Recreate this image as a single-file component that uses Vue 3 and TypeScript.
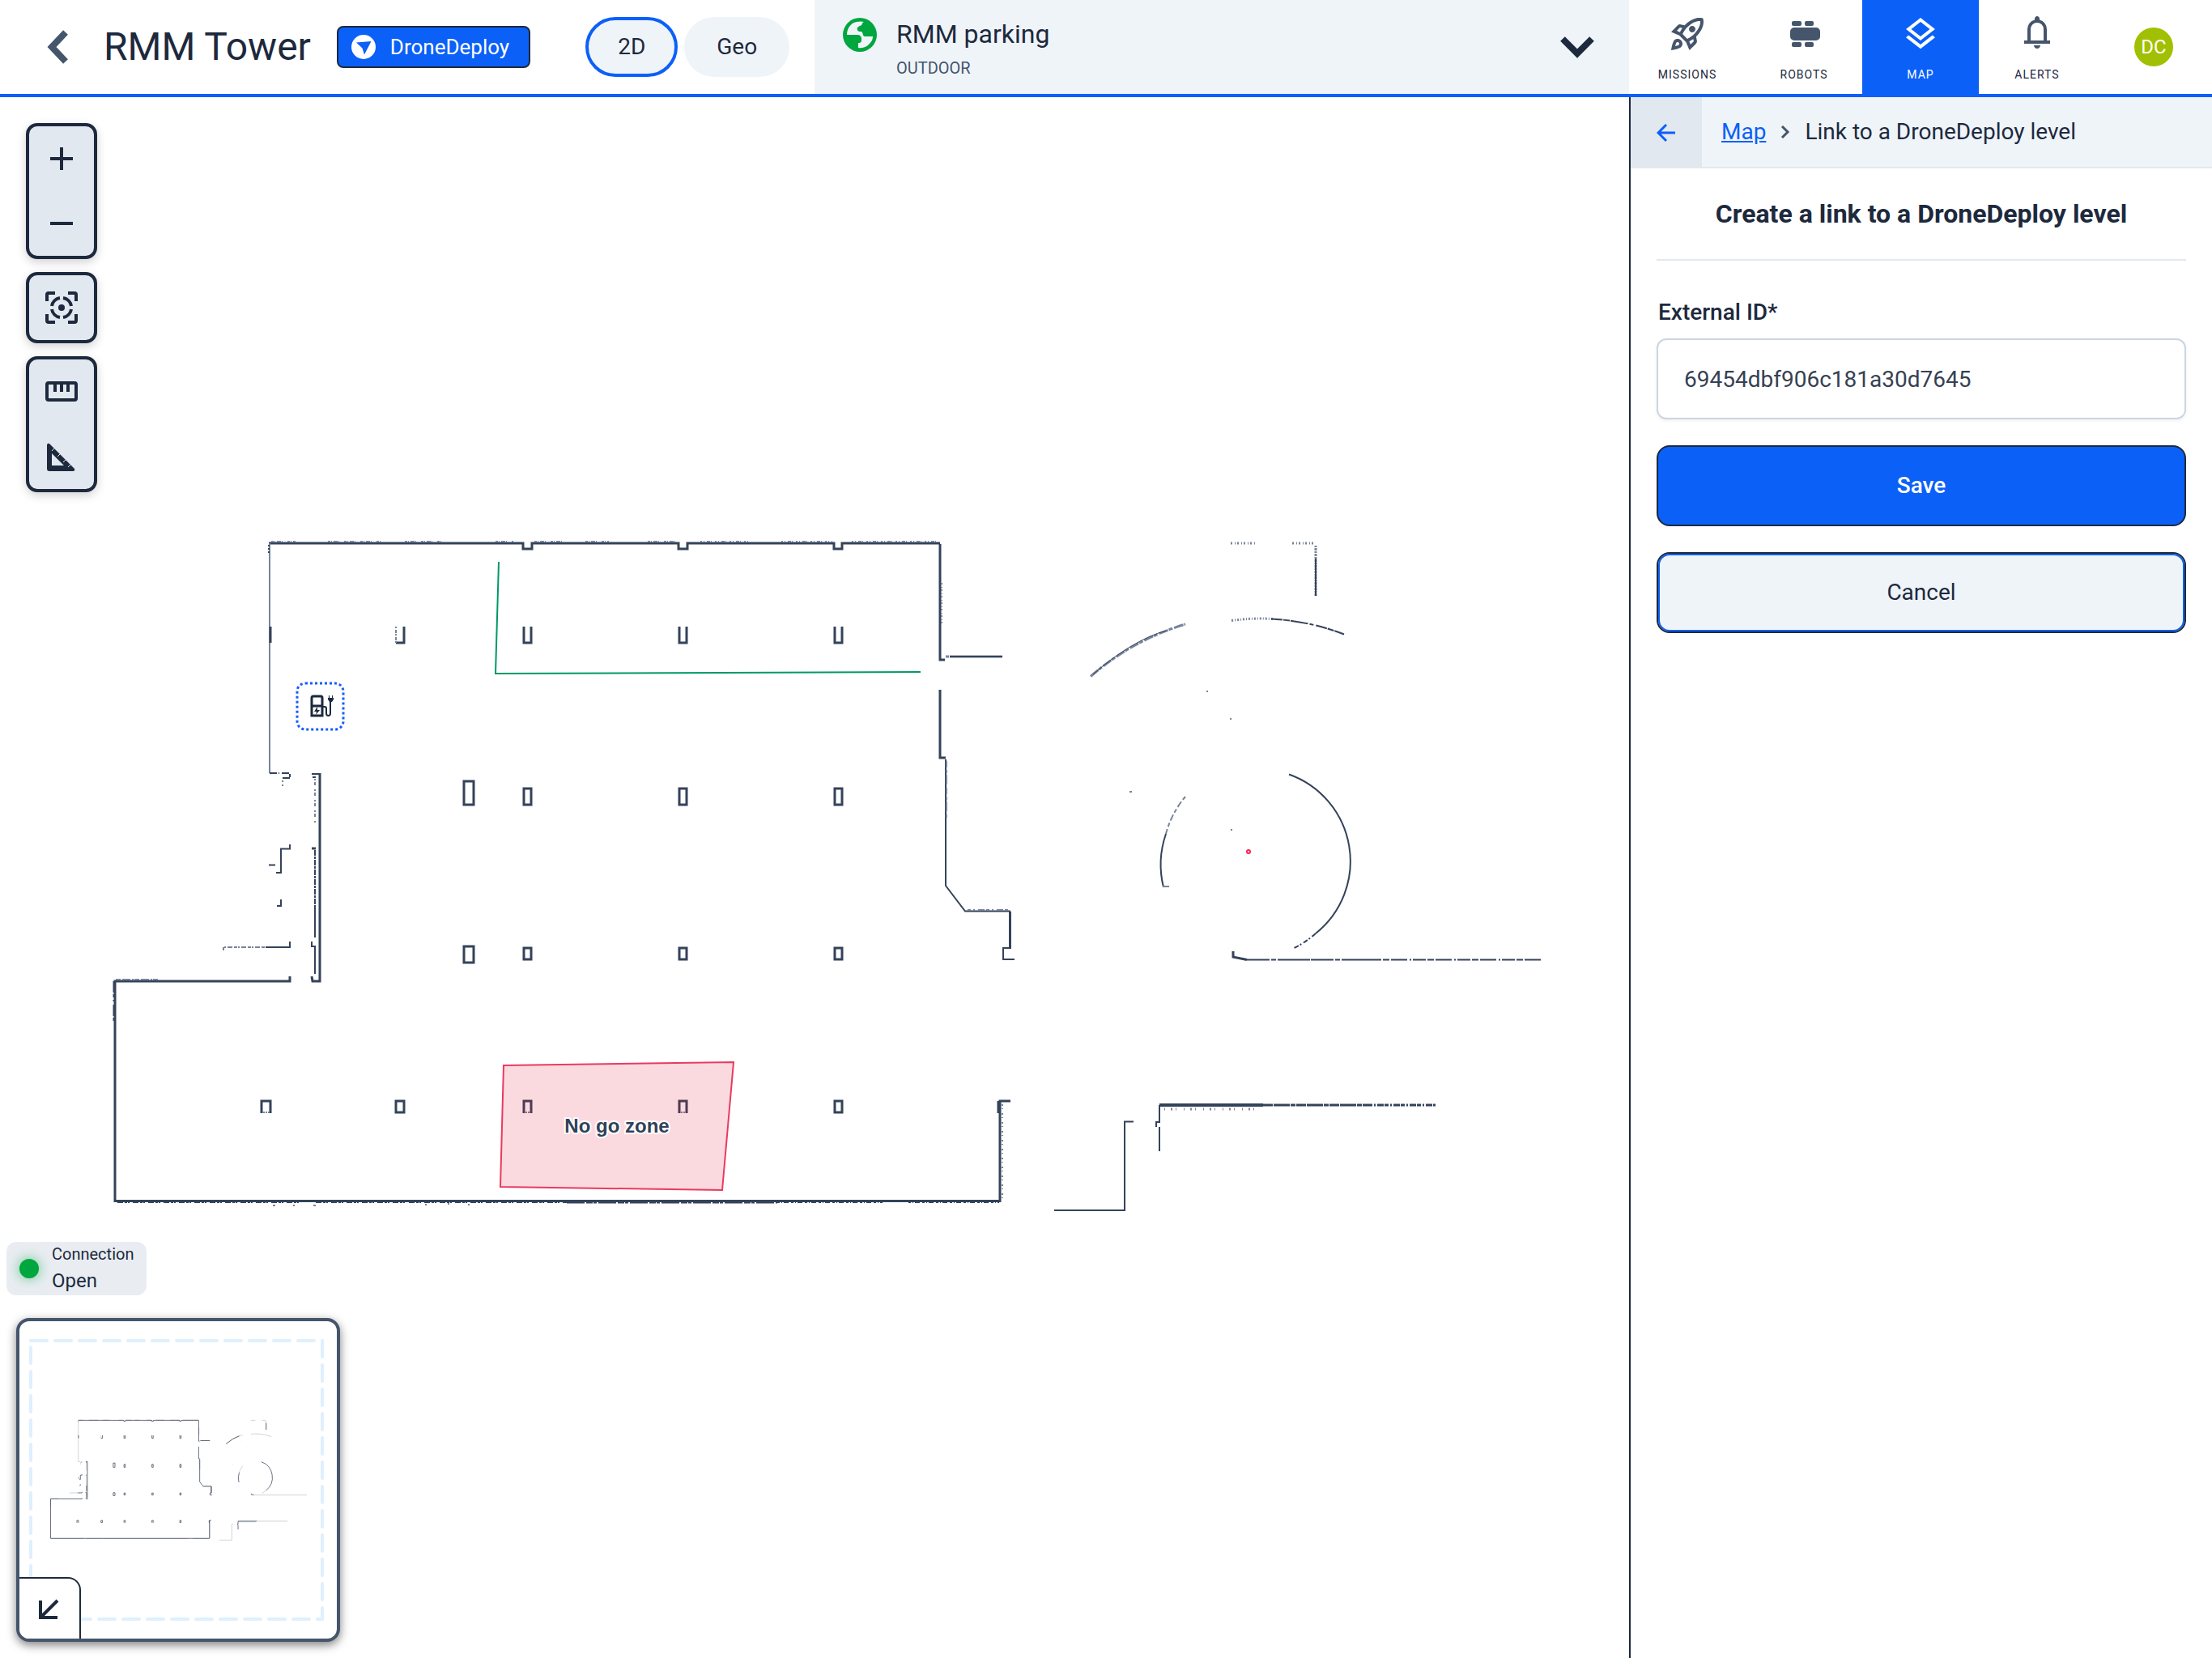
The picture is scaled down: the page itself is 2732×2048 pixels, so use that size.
<script setup lang="ts">
import { ref } from 'vue'

interface Stroke {
  d: string
  w: number
  dash?: string
  soft?: boolean
}

interface NavItem {
  id: string
  label: string
  viewBox: string
  path: string
}

const viewMode = ref<'2d' | 'geo'>('2d')
const externalId = ref('69454dbf906c181a30d7645')
const activeNav = 'map'

const navItems: NavItem[] = [
  {
    id: 'missions',
    label: 'MISSIONS',
    viewBox: '0 0 24 24',
    path: 'M6 15c-.83 0-1.58.34-2.12.88C2.7 17.06 2 22 2 22s4.94-.7 6.12-1.88c.54-.54.88-1.29.88-2.12 0-1.66-1.34-3-3-3zm.71 3.71c-.28.28-2.17.76-2.17.76s.47-1.88.76-2.17c.17-.19.42-.3.7-.3.55 0 1 .45 1 1 0 .28-.11.53-.29.71zm10.71-5.06c6.36-6.36 4.24-11.31 4.24-11.31S16.71.22 10.35 6.58l-2.49-.5c-.65-.13-1.33.08-1.81.55L2 10.69l5 2.14L11.17 17l2.14 5 4.05-4.05c.47-.47.68-1.15.55-1.81l-.49-2.49zM7.41 10.83l-1.91-.82 1.97-1.97 1.44.29c-.57.83-1.08 1.7-1.5 2.5zm6.58 7.67l-.82-1.91c.8-.42 1.67-.93 2.49-1.5l.29 1.44-1.96 1.97zM16 12.24c-1.32 1.32-3.38 2.4-4.04 2.73l-2.93-2.93c.32-.65 1.4-2.71 2.73-4.04 4.68-4.68 8.23-3.99 8.23-3.99s.69 3.55-3.99 8.23zM15 11c1.1 0 2-.9 2-2s-.9-2-2-2-2 .9-2 2 .9 2 2 2z',
  },
  {
    id: 'robots',
    label: 'ROBOTS',
    viewBox: '0 0 48 48',
    path: 'M12 16h27a5 5 0 0 1 5 5v6a5 5 0 0 1-5 5H12a5 5 0 0 1-5-5v-6a5 5 0 0 1 5-5zM11 8h8a2 2 0 0 1 2 2v2a2 2 0 0 1-2 2h-8a2 2 0 0 1-2-2v-2a2 2 0 0 1 2-2zM27 8h7a2 2 0 0 1 2 2v2a2 2 0 0 1-2 2h-7a2 2 0 0 1-2-2v-2a2 2 0 0 1 2-2zM11 34h8a2 2 0 0 1 2 2v2a2 2 0 0 1-2 2h-8a2 2 0 0 1-2-2v-2a2 2 0 0 1 2-2zM27 34h7a2 2 0 0 1 2 2v2a2 2 0 0 1-2 2h-7a2 2 0 0 1-2-2v-2a2 2 0 0 1 2-2z',
  },
  {
    id: 'map',
    label: 'MAP',
    viewBox: '0 0 24 24',
    path: 'M11.99 18.54l-7.37-5.73L3 14.07l9 7 9-7-1.63-1.27zM12 16l7.36-5.73L21 9l-9-7-9 7 1.63 1.27L12 16zm0-11.47L17.74 9 12 13.47 6.26 9 12 4.53z',
  },
  {
    id: 'alerts',
    label: 'ALERTS',
    viewBox: '0 -920 960 960',
    path: 'M160-200v-80h80v-280q0-83 50-147.500T420-792v-28q0-25 17.500-42.500T480-880q25 0 42.500 17.500T540-820v28q80 20 130 84.500T720-560v280h80v80H160Zm320 120q-33 0-56.500-23.500T400-160h160q0 33-23.500 56.500T480-80ZM320-280h320v-280q0-66-47-113t-113-47q-66 0-113 47t-47 113v280Z',
  },
]

// Solid and scanned wall segments, in floor-plan coordinates.
const walls: Stroke[] = [
  // upper hall
  { d: 'M332 551H646V558H657V551H838V558H849V551H1030V558H1040V551H1161', w: 3 },
  { d: 'M335 549H365M405 549H470M500 549H545M612 549H634M660 549H700M723 549H752M800 549H834', w: 2, dash: '3 1 1 2 5 1 1 6', soft: true },
  { d: 'M865 549H925M965 549H1028M1052 549H1160', w: 2, dash: '2 2 1 3 4 1 1 4', soft: true },
  { d: 'M333 551V835', w: 2, soft: true },
  { d: 'M332 553V565', w: 2, dash: '2 2' },
  { d: 'M334 654V674', w: 3 },
  { d: 'M1161 552V695H1167', w: 3 },
  { d: 'M1163 600V650', w: 2, dash: '2 3 1 2', soft: true },
  { d: 'M1168 691H1172M1173 691H1238', w: 3, soft: true },
  { d: 'M1173 691H1238', w: 2 },
  { d: 'M1161 732V816H1168', w: 3 },
  { d: 'M1168 818V974L1192 1005.500H1247V1051', w: 2 },
  { d: 'M1169 820V890', w: 2, dash: '8 3 4 2 12 4', soft: true },
  { d: 'M1195 1004H1245', w: 2, dash: '4 3 2 4 8 2', soft: true },
  { d: 'M1248 1006V1051H1239V1065H1253', w: 2 },
  // stair core on the left
  { d: 'M333 835H345M348 835H358V841H347', w: 2, dash: '9 2 4 1' },
  { d: 'M349 844V854', w: 2, dash: '2 3', soft: true },
  { d: 'M385 836H395M386 840H390', w: 2 },
  { d: 'M395 835V1092H386L385 1086', w: 3 },
  { d: 'M389 842V896', w: 2, dash: '2 2 4 5', soft: true },
  { d: 'M385 928H390', w: 3 },
  { d: 'M389 930V1000', w: 2, dash: '7 1 3 1' },
  { d: 'M389 1000V1038M385 1043V1049H389V1083', w: 2 },
  { d: 'M358 923V928.500H347V958H341M332 948.500H340M347 991V999H342', w: 2 },
  { d: 'M276 1054V1050H328', w: 2, dash: '4 1 2 2 6 2', soft: true },
  { d: 'M328 1050H358V1043', w: 2 },
  // lower hall
  { d: 'M358 1086V1092H142V1363.500H1235V1240H1248', w: 3 },
  { d: 'M141 1092V1142', w: 3, dash: '14 2 4 3 2 4' },
  { d: 'M143 1090H195', w: 2, dash: '6 2 10 2 2 1', soft: true },
  { d: 'M145 1365H370M390 1365H500M505 1365H700', w: 2, dash: '7 2 3 1 2 4' },
  { d: 'M700 1365H960', w: 3, dash: '22 2 8 1 4 2' },
  { d: 'M960 1365H1090M1122 1365H1234', w: 2, dash: '3 2 1 2 6 3' },
  { d: 'M337 1369H340M362 1369H364M387 1369H390M525 1368H527M553 1367H555M578 1368H580', w: 2, soft: true },
  { d: 'M1233 1240V1255', w: 3 },
  { d: 'M1238 1244V1360', w: 2, dash: '2 3 1 5', soft: true },
  // ramp
  { d: 'M1520 551H1551M1596 551H1622', w: 3, dash: '2 3 1 2', soft: true },
  { d: 'M1625 554V616', w: 3, dash: '2 1 3 1', soft: true },
  { d: 'M1625 570V616', w: 2 },
  { d: 'M1347 715.500Q1398 671 1464 651', w: 3, dash: '12 1 5 2', soft: true },
  { d: 'M1350 713Q1398 671 1440 659', w: 1 },
  { d: 'M1521 646.500C1540 644 1555 643.500 1572 644.500', w: 3, dash: '2 2 1 2', soft: true },
  { d: 'M1570 644.500C1600 646 1630 652 1660 663.500', w: 2, dash: '14 1 8 1 22 2 5 3' },
  { d: 'M1592 836.500A114 114 0 0 1 1625 1033', w: 2 },
  { d: 'M1625 1033A114 114 0 0 1 1596 1052', w: 2, dash: '6 3 2 2' },
  { d: 'M1464 864A117 117 0 0 0 1440 910', w: 2, dash: '5 3 8 3', soft: true },
  { d: 'M1440 910A117 117 0 0 0 1437 976', w: 2 },
  { d: 'M1436 975H1444M1490 734H1492M1519 768H1521M1395 858H1398M1520 905H1522', w: 2, soft: true },
  { d: 'M1523 1055V1062L1540 1065.500', w: 3 },
  { d: 'M1540 1065.500H1690', w: 2, dash: '28 2 6 2 40 1' },
  { d: 'M1690 1065.500H1906', w: 2, dash: '16 2 8 2 20 3 2 2' },
  { d: 'M1432 1245H1560', w: 4 },
  { d: 'M1560 1245H1690', w: 3, dash: '12 1 20 1 6 1' },
  { d: 'M1690 1245H1773', w: 3, dash: '5 2 2 2 8 1' },
  { d: 'M1438 1250H1552', w: 3, dash: '1 7 2 4 1 9', soft: true },
  { d: 'M1432 1245V1266H1428V1272M1432 1272V1302', w: 2 },
  { d: 'M1400 1265.500H1389V1375H1302', w: 2, dash: '400 0' },
]

const pillarColumns = [646, 838, 1030]
const pillars: Stroke[] = [
  { d: 'M499 654V674H489', w: 3 },
  { d: 'M489 654V674', w: 2, dash: '2 2 4 1', soft: true },
  ...pillarColumns.map((x) => ({ d: `M${x + 1} 654V674H${x + 10}V654`, w: 3 })),
  { d: 'M573 845H585V874H573Z', w: 3 },
  ...pillarColumns.map((x) => ({ d: `M${x + 1} 854H${x + 10}V874H${x + 1}Z`, w: 3 })),
  { d: 'M573 1049H585V1069H573Z', w: 3 },
  ...pillarColumns.map((x) => ({ d: `M${x + 1} 1051H${x + 10}V1065H${x + 1}Z`, w: 3 })),
  { d: 'M323 1255V1240H334V1255', w: 3 },
  { d: 'M489 1240H499V1254H489Z', w: 3 },
  { d: 'M647 1255V1240H656V1255', w: 3 },
  { d: 'M839 1255V1240H848V1255', w: 3 },
  { d: 'M1031 1240H1040V1254H1031Z', w: 3 },
  { d: 'M325 1254H333M649 1254H655M841 1254H847', w: 2, dash: '2 1', soft: true },
]

const floorPlan: Stroke[] = [...walls, ...pillars]
</script>

<template>
  <div class="app">
    <header class="topbar">
      <div class="site">
        <button class="back" type="button" aria-label="Back">
          <svg width="28" height="44" viewBox="0 0 28 44" fill="none" stroke="currentColor" stroke-width="8">
            <path d="M25 4L8 22l17 18" />
          </svg>
        </button>
        <h1>RMM Tower</h1>
        <a class="badge" href="#dronedeploy">
          <svg width="30" height="30" viewBox="0 0 30 30">
            <circle cx="15" cy="15" r="15" fill="#fff" />
            <path d="M6 9.500L24.500 8 16 24.500l-2.500-8z" fill="#0b60f8" />
          </svg>
          DroneDeploy
        </a>
        <div class="modes">
          <button type="button" :class="['mode', { on: viewMode === '2d' }]" @click="viewMode = '2d'">2D</button>
          <button type="button" :class="['mode', { on: viewMode === 'geo' }]" @click="viewMode = 'geo'">Geo</button>
        </div>
      </div>

      <button class="level" type="button">
        <svg class="globe" width="42" height="42" viewBox="0 0 42 42">
          <circle cx="21" cy="21" r="21" fill="#00a63e" />
          <path
            d="M26 5c-3 1-1 4-5 5-3 1-4 3-3 5 1 3 5 1 6 3 1 3 1 5 4 5h9c0 5-3 8-6 11-3 2-7 4-12 3v-6c4 0 4-2 4-4 0-5-2-6-6-6H5C5 13 10 6 17 5q5-1 9 0z"
            fill="#eff4f9"
          />
        </svg>
        <span class="level-text">
          <span class="level-name">RMM parking</span>
          <span class="level-kind">OUTDOOR</span>
        </span>
        <svg width="42" height="28" viewBox="0 0 42 28" fill="none" stroke="#1d293d" stroke-width="8">
          <path d="M3 4l18 18L39 4" />
        </svg>
      </button>

      <nav class="nav">
        <a
          v-for="item in navItems"
          :key="item.id"
          :href="'#' + item.id"
          :class="['nav-item', { active: item.id === activeNav }]"
        >
          <svg width="48" height="48" :viewBox="item.viewBox" fill="currentColor"><path :d="item.path" /></svg>
          <span>{{ item.label }}</span>
        </a>
        <div class="account"><button class="avatar" type="button">DC</button></div>
      </nav>
    </header>

    <main class="content">
      <section class="map" aria-label="Map">
        <svg class="canvas" viewBox="0 0 2012 1928">
          <g fill="none">
            <path
              v-for="(s, i) in floorPlan"
              :key="i"
              :d="s.d"
              :stroke="s.soft ? '#78849a' : '#34435a'"
              :stroke-width="s.w"
              :stroke-dasharray="s.dash"
            />
          </g>
          <path d="M616 574L612 712L1137 710" fill="none" stroke="#009966" stroke-width="2" />
          <path d="M622 1196L906 1192L892 1350L618 1346Z" fill="#e4062a" fill-opacity="0.15" stroke="#e93a60" stroke-width="2" />
          <circle cx="1542" cy="932" r="2" fill="#fff" stroke="#ff2056" stroke-width="2" />
          <text class="zone-name" x="762" y="1279" text-anchor="middle">No go zone</text>
          <g>
            <rect x="367" y="724" width="57" height="57" rx="10" fill="#fff" stroke="#155dfc" stroke-width="3" stroke-dasharray="3 3" />
            <g fill="none" stroke="#1d293d">
              <path d="M385 764v-22q0-2 2-2h9q2 0 2 2v22z" stroke-width="3" />
              <path d="M385 752h13" stroke-width="3" />
              <path d="M399 753h2q2 0 2 2v6q0 3 2.500 3t2.500-3v-14" stroke-width="2" />
            </g>
            <path d="M405 742h1v-3h1v3h3v-3h1v3h1v2l-2 3h-3l-2-3zM392 753l-4 6h3l-1 4 5-6h-3z" fill="#1d293d" />
          </g>
        </svg>

        <div class="tools">
          <div class="tool-group">
            <button type="button" aria-label="Zoom in">
              <svg width="48" height="48" viewBox="0 0 48 48" fill="none" stroke="currentColor" stroke-width="4"><path d="M10 24h28M24 10v28" /></svg>
            </button>
            <button type="button" aria-label="Zoom out">
              <svg width="48" height="48" viewBox="0 0 48 48" fill="none" stroke="currentColor" stroke-width="4"><path d="M10 24h28" /></svg>
            </button>
          </div>
          <div class="tool-group">
            <button type="button" aria-label="Center map">
              <svg width="48" height="48" viewBox="0 0 48 48" fill="none" stroke="currentColor" stroke-width="4">
                <path d="M6 16V8q0-2 2-2h8M32 6h8q2 0 2 2v8M42 32v8q0 2-2 2h-8M16 42H8q-2 0-2-2v-8" />
                <path d="M12 22a12 12 0 0 1 10-10M26 12a12 12 0 0 1 10 10M36 26a12 12 0 0 1-10 10M22 36a12 12 0 0 1-10-10" />
                <circle cx="24" cy="24" r="4" fill="currentColor" stroke="none" />
              </svg>
            </button>
          </div>
          <div class="tool-group">
            <button type="button" aria-label="Measure distance">
              <svg width="48" height="48" viewBox="0 0 48 48" fill="none" stroke="currentColor" stroke-width="4">
                <rect x="6" y="13" width="36" height="21" rx="2" />
                <path d="M16 14v10M24 14v10M32 14v10" />
              </svg>
            </button>
            <button type="button" aria-label="Measure area">
              <svg width="48" height="48" viewBox="0 0 48 48">
                <path d="M6 10q0-3 3-2l31 31q1 3-2 3H9q-3 0-3-3zM12 20v15h15z" fill="currentColor" fill-rule="evenodd" />
                <path d="M12 17l3-3M19 24l3-3M26 31l3-3M32 37l3-3" stroke="#e2e8f0" stroke-width="1" />
              </svg>
            </button>
          </div>
        </div>

        <div class="connection">
          <span class="dot"></span>
          <div>
            <div class="connection-label">Connection</div>
            <div class="connection-state">Open</div>
          </div>
        </div>

        <div class="minimap">
          <svg width="392" height="392" viewBox="0 0 392 392" fill="none">
            <g transform="translate(13 23.500) scale(0.1795)">
              <path
                v-for="(s, i) in floorPlan"
                :key="i"
                :d="s.d"
                stroke="#1d293d"
                :stroke-opacity="s.dash || s.soft ? 0.2 : 0.65"
                :stroke-width="1"
                vector-effect="non-scaling-stroke"
              />
            </g>
            <path d="M14 24H374V368H14Z" stroke="#dff0fe" stroke-width="4" stroke-linecap="round" stroke-dasharray="20 10" />
          </svg>
          <button class="collapse" type="button" aria-label="Collapse minimap">
            <svg width="32" height="32" viewBox="0 0 32 32" fill="none" stroke="currentColor" stroke-width="4">
              <path d="M26 6L6 26M5 6v21h21" />
            </svg>
          </button>
        </div>
      </section>

      <aside class="panel">
        <div class="crumbs">
          <button class="crumb-back" type="button" aria-label="Back to map">
            <svg width="24" height="24" viewBox="0 0 24 24" fill="none" stroke="currentColor" stroke-width="3">
              <path d="M23 12H3M12 2L2 12l10 10" />
            </svg>
          </button>
          <div class="trail">
            <a href="#map">Map</a>
            <svg width="12" height="18" viewBox="0 0 12 18" fill="none" stroke="#45556c" stroke-width="3"><path d="M2 2l7 7-7 7" /></svg>
            <span>Link to a DroneDeploy level</span>
          </div>
        </div>
        <form class="form" @submit.prevent>
          <h2>Create a link to a DroneDeploy level</h2>
          <label for="external-id">External ID*</label>
          <input id="external-id" v-model="externalId" type="text" />
          <button class="save" type="submit">Save</button>
          <button class="cancel" type="button">Cancel</button>
        </form>
      </aside>
    </main>
  </div>
</template>

<style>
body {
  margin: 0;
  background: #fff;
}
</style>

<style scoped>
.app {
  display: flex;
  flex-direction: column;
  min-height: 100vh;
  font-family: Roboto, sans-serif;
  font-size: 28px;
  line-height: 40px;
  color: #1d293d;
}

.app *,
.app {
  box-sizing: border-box;
}

button,
input {
  font: inherit;
  color: inherit;
  margin: 0;
  padding: 0;
  border: 0;
  background: none;
}

button {
  cursor: pointer;
}

a {
  color: inherit;
  text-decoration: none;
}

svg {
  display: block;
  flex: none;
}

.topbar {
  display: grid;
  grid-template-columns: 1fr 1fr 720px;
  height: 120px;
  border-bottom: 4px solid #0b60f8;
}

.site {
  display: flex;
  align-items: center;
  padding-left: 56px;
}

.back {
  color: #45556c;
}

h1 {
  margin: 0 32px 0 44px;
  font-size: 48px;
  line-height: 56px;
  font-weight: 400;
  white-space: nowrap;
}

.badge {
  display: flex;
  align-items: center;
  gap: 18px;
  height: 52px;
  padding: 0 24px 0 16px;
  border: 2px solid #1d293d;
  border-radius: 8px;
  background: #0b60f8;
  color: #fff;
  font-size: 26px;
  white-space: nowrap;
}

.modes {
  display: flex;
  gap: 8px;
  margin-left: 68px;
}

.mode {
  height: 74px;
  padding: 0 40px;
  border-radius: 37px;
  background: #eff4f9;
}

.mode.on {
  padding: 0 36px;
  border: 4px solid #0b60f8;
}

.level {
  display: flex;
  align-items: center;
  gap: 24px;
  padding: 0 43px 0 35px;
  background: #eff4f9;
  text-align: left;
}

.globe {
  align-self: flex-start;
  margin-top: 22px;
}

.level-text {
  display: flex;
  flex: 1;
  flex-direction: column;
  gap: 6px;
  padding-top: 2px;
}

.level-name {
  font-size: 32px;
  line-height: 44px;
}

.level-kind {
  font-size: 20px;
  line-height: 28px;
  color: #45556c;
}

.nav {
  display: grid;
  grid-template-columns: repeat(5, 1fr);
}

.nav-item {
  display: flex;
  flex-direction: column;
  align-items: center;
  gap: 16px;
  padding-top: 18px;
  font-size: 14px;
  line-height: 20px;
  letter-spacing: 1px;
}

.nav-item svg {
  color: #45556c;
}

.nav-item.active,
.nav-item.active svg {
  background: #0b60f8;
  color: #fff;
}

.account {
  display: flex;
  align-items: center;
  justify-content: center;
}

.avatar {
  width: 48px;
  height: 48px;
  border-radius: 50%;
  background: #a2c003;
  color: #fff;
  font-size: 24px;
  line-height: 48px;
}

.content {
  display: grid;
  flex: 1;
  grid-template-columns: 1fr 720px;
}

.map {
  position: relative;
  overflow: hidden;
}

.canvas {
  width: 100%;
}

.zone-name {
  font: bold 24px 'Liberation Sans', sans-serif;
  fill: #314158;
  stroke: #fff;
  stroke-width: 4px;
  stroke-linejoin: round;
  paint-order: stroke;
}

.tools {
  position: absolute;
  top: 32px;
  left: 32px;
  display: flex;
  flex-direction: column;
  gap: 16px;
}

.tool-group {
  display: flex;
  flex-direction: column;
  border: 4px solid #1d293d;
  border-radius: 14px;
  background: #e2e8f0;
  box-shadow: 0 4px 12px rgb(0 0 0 / 18%);
}

.tool-group button {
  display: flex;
  align-items: center;
  justify-content: center;
  width: 80px;
  height: 80px;
}

.connection {
  position: absolute;
  bottom: 448px;
  left: 8px;
  display: flex;
  align-items: center;
  gap: 16px;
  height: 66px;
  padding: 0 16px;
  border-radius: 12px;
  background: #e9edf2;
}

.dot {
  width: 24px;
  height: 24px;
  border-radius: 50%;
  background: #00a63e;
  box-shadow: 0 0 16px rgb(0 166 62 / 60%);
}

.connection-label {
  margin-bottom: 2px;
  font-size: 20px;
  line-height: 28px;
}

.connection-state {
  font-size: 24px;
  line-height: 34px;
}

.minimap {
  position: absolute;
  bottom: 20px;
  left: 20px;
  overflow: hidden;
  border: 4px solid #45556c;
  border-radius: 16px;
  background: #fff;
  box-shadow: 0 4px 12px rgb(0 0 0 / 50%);
}

.collapse {
  position: absolute;
  bottom: 0;
  left: 0;
  display: flex;
  align-items: center;
  justify-content: center;
  width: 76px;
  height: 76px;
  border: solid #1d293d;
  border-width: 2px 2px 0 0;
  border-top-right-radius: 16px;
  background: #fff;
}

.panel {
  border-left: 2px solid #1d293d;
}

.crumbs {
  display: flex;
  height: 88px;
  background: #eff4f9;
}

.crumb-back {
  display: flex;
  align-items: center;
  justify-content: center;
  width: 88px;
  background: #e2e8f0;
  color: #0b60f8;
}

.trail {
  display: flex;
  flex: 1;
  align-items: center;
  gap: 18px;
  padding-left: 24px;
  border-bottom: 2px solid #e2e8f0;
  white-space: nowrap;
}

.trail a {
  color: #0b60f8;
  text-decoration: underline;
}

.form {
  display: flex;
  flex-direction: column;
  padding: 32px;
}

h2 {
  margin: 0 0 44px;
  padding-bottom: 32px;
  border-bottom: 2px solid #e2e8f0;
  font-size: 32px;
  line-height: 48px;
  font-weight: 700;
  text-align: center;
}

label {
  margin-bottom: 12px;
  padding-left: 2px;
  font-weight: 500;
}

.form input {
  height: 100px;
  margin-bottom: 32px;
  padding: 0 32px;
  border: 2px solid #cad5e2;
  border-radius: 12px;
  box-shadow: 0 2px 4px rgb(0 0 0 / 6%);
  color: #364153;
}

.save,
.cancel {
  height: 100px;
  border: 2px solid #1d293d;
  border-radius: 16px;
}

.save {
  margin-bottom: 32px;
  background: #0b60f8;
  color: #fff;
  font-weight: 500;
}

.cancel {
  background: #eff4f9;
  box-shadow: inset 0 0 0 2px #0b60f8;
}
</style>
